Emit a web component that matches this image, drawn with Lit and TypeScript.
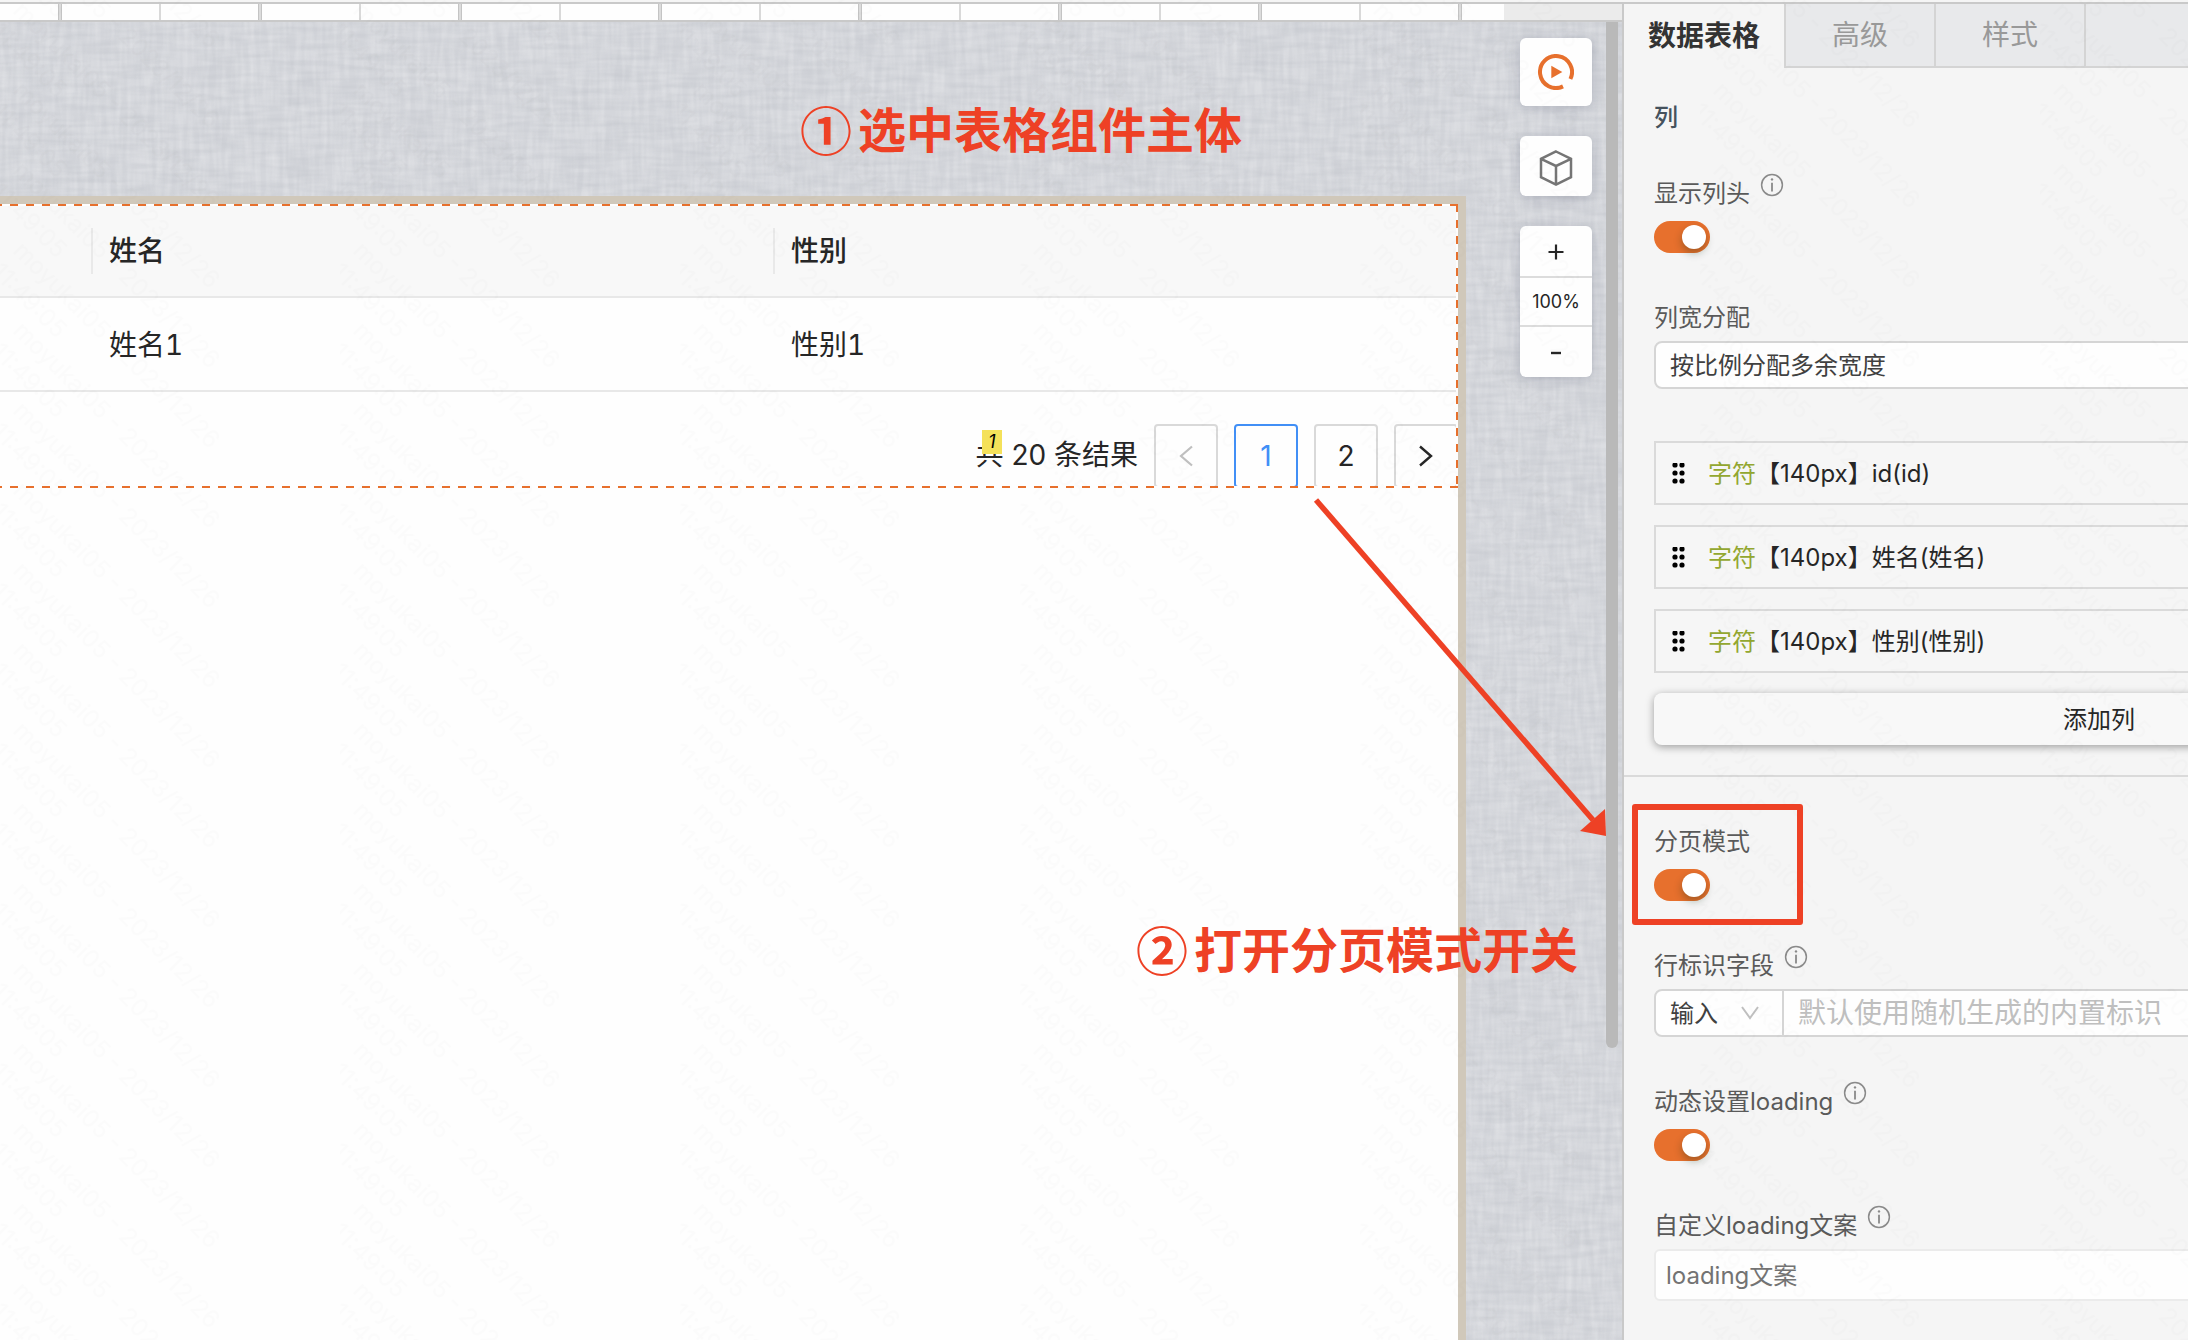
import { LitElement, html, css, svg } from "lit";
import { customElement, property } from "lit/decorators.js";

const FONT = css`Inter, "Noto Sans CJK SC", sans-serif`;

@customElement("info-mark")
class InfoMark extends LitElement {
  static styles = css`
    :host { display: block; width: 24px; height: 24px; }
    svg { display: block; }
  `;
  render() {
    return html`<svg width="24" height="24" viewBox="0 0 24 24" fill="none" stroke="#8a8a8a" stroke-width="1.5" aria-hidden="true">
      <circle cx="12" cy="12" r="10.4" />
      <path d="M12 9.8V18.500" stroke-width="1.800" />
      <circle cx="12" cy="6.4" r="1.2" fill="#8a8a8a" stroke="none" />
    </svg>`;
  }
}

@customElement("toggle-field")
class ToggleField extends LitElement {
  @property() label = "";
  @property({ type: Boolean }) info = false;
  static styles = css`
    :host { display: flex; flex-direction: column; align-items: flex-start; gap: 12px; }
    .head { display: flex; align-items: flex-start; gap: 10px; height: 32px; }
    label { font: 400 24px/34px ${FONT}; color: #5a5a5a; }
    info-mark { margin-top: -4px; }
    input {
      appearance: none; box-sizing: border-box; margin: 0; width: 56px; height: 32px; padding: 4px;
      border-radius: 16px; background: #cfcfcf; display: flex; cursor: pointer;
    }
    input::before {
      content: ""; width: 24px; height: 24px; border-radius: 50%; background: #fff;
      box-shadow: 0 4px 8px rgba(0, 35, 11, 0.3);
    }
    input:checked { background: #e7702d; justify-content: flex-end; }
  `;
  render() {
    return html`
      <div class="head"><label for="toggle">${this.label}</label>${this.info ? html`<info-mark></info-mark>` : ""}</div>
      <input id="toggle" type="checkbox" role="switch" checked />
    `;
  }
}

@customElement("config-panel")
class ConfigPanel extends LitElement {
  static styles = css`
    :host { display: block; overflow: hidden; background: #f5f5f5; font: 400 24px/34px ${FONT}; color: #262626; }
    .tabs { display: flex; height: 64px; }
    .tab {
      box-sizing: border-box; width: 150px; padding: 0; border: solid #d4d4d4; border-width: 0 0 2px 2px;
      background: #e8e9eb; color: #999; font: 400 28px/60px ${FONT};
    }
    .tab.on { width: 160px; border: 0; background: none; color: #333; font-weight: 700; }
    .rest { flex: 1; border: solid #d4d4d4; border-width: 0 0 2px 2px; background: #e8e9eb; }
    .section { box-sizing: border-box; min-width: 950px; padding: 33px 30px 30px; display: flex; flex-direction: column; gap: 48px; }
    .section + .section { border-top: 2px solid #dadada; padding-top: 48px; }
    h2 { margin: 0 0 -6px; font: 500 24px/34px ${FONT}; color: #45525d; }
    .field { display: flex; flex-direction: column; gap: 8px; }
    .head { display: flex; align-items: flex-start; gap: 10px; height: 32px; color: #5a5a5a; }
    info-mark { margin-top: -4px; }
    select, input {
      box-sizing: border-box; height: 48px; margin: 0; border: 2px solid #d5d5d5; border-radius: 8px;
      background: #fefefe; font: 400 24px/32px ${FONT}; color: #404040; appearance: none; outline: 0;
    }
    select { padding: 2px 14px 0; }
    .group { display: flex; position: relative; }
    .group select { width: 130px; border-radius: 8px 0 0 8px; }
    .group input { flex: 1; margin-left: -2px; padding: 0 14px; border-radius: 0 8px 8px 0; font-size: 28px; }
    .group svg { position: absolute; left: 86px; top: 16px; pointer-events: none; }
    .plain { height: 52px; border-color: #ebebeb; padding: 0 10px; border-radius: 6px; }
    input::placeholder { color: #bfbfbf; opacity: 1; }
    .plain::placeholder { color: #737373; }
    .columns { display: flex; flex-direction: column; gap: 20px; margin: 4px 0 0; padding: 0; list-style: none; }
    .column {
      box-sizing: border-box; height: 64px; padding: 2px 16px 0; display: flex; align-items: center;
      border: 2px solid #dadada; background: #f6f6f6;
    }
    .column svg { margin-right: 22px; }
    .type { color: #93a730; }
    .add {
      height: 52px; padding: 2px 0 0; margin-top: -28px; border: 0; border-radius: 8px; background: #f8f8f8; color: #262626;
      font: 400 24px/32px ${FONT}; box-shadow: 0 2px 8px rgba(0, 0, 0, 0.36);
    }
  `;
  render() {
    const columns = ["id(id)", "姓名(姓名)", "性别(性别)"];
    return html`
      <div class="tabs" role="tablist">
        <button class="tab on" role="tab" aria-selected="true">数据表格</button>
        <button class="tab" role="tab">高级</button>
        <button class="tab" role="tab">样式</button>
        <div class="rest"></div>
      </div>
      <div class="section">
        <h2>列</h2>
        <toggle-field label="显示列头" info></toggle-field>
        <div class="field">
          <div class="head"><label for="width-mode">列宽分配</label></div>
          <select id="width-mode"><option>按比例分配多余宽度</option></select>
        </div>
        <ul class="columns">
          ${columns.map(
            (name) => html`<li class="column">
              <svg width="14" height="22" viewBox="0 0 14 22" fill="#000" aria-hidden="true">
                ${[3, 11, 19].map((y) => [3, 10].map((x) => svg`<circle cx=${x} cy=${y - 1} r="2.6" />`))}
              </svg>
              <span class="type">字符</span><span>【140px】${name}</span>
            </li>`
          )}
        </ul>
        <button class="add">添加列</button>
      </div>
      <div class="section">
        <toggle-field label="分页模式"></toggle-field>
        <div class="field">
          <div class="head"><label for="row-key">行标识字段</label><info-mark></info-mark></div>
          <div class="group">
            <select aria-label="类型"><option>输入</option></select>
            <input id="row-key" placeholder="默认使用随机生成的内置标识" />
            <svg width="20" height="16" viewBox="0 0 20 16" fill="none" stroke="#bfbfbf" stroke-width="2" aria-hidden="true"><path d="M2 2l8 11 8-11" /></svg>
          </div>
        </div>
        <toggle-field label="动态设置loading" info></toggle-field>
        <div class="field">
          <div class="head"><label for="loading-text">自定义loading文案</label><info-mark></info-mark></div>
          <input id="loading-text" class="plain" placeholder="loading文案" />
        </div>
      </div>
    `;
  }
}

@customElement("design-canvas")
class DesignCanvas extends LitElement {
  static styles = css`
    :host { display: flex; flex-direction: column; position: relative; overflow: hidden; font: 400 28px/40px ${FONT}; color: #262626; }
    .ruler { height: 16px; border-bottom: 2px solid #c9c9c9; background: #ebebeb; display: flex; }
    .scale {
      flex: 1; margin-right: 118px;
      background:
        linear-gradient(90deg, #c4c4c4 1px, #dcdcdc 1px 3px, #c4c4c4 3px 4px, transparent 4px) 58px 0 / 200px 100%,
        linear-gradient(90deg, #d9d9d9 2px, transparent 2px) 159px 0 / 200px 100%,
        #fefefe;
    }
    .desk { flex: 1; position: relative; background: #d4d6db; display: flex; padding: 174px 0 0; overflow: hidden; }
    .linen { position: absolute; inset: 0; width: 100%; height: 100%; }
    .board { position: relative; flex: 1; margin-right: 156px; border: solid #d0c8ba; border-width: 8px 8px 0 0; background: #fefefe; }
    .widget { position: relative; height: 284px; overflow: hidden; padding: 2px 2px 0 0; box-sizing: border-box; }
    .outline {
      position: absolute; inset: 0; pointer-events: none;
      --h: repeating-linear-gradient(90deg, #e7702d 0 8px, #fefefe 8px 16px);
      --v: repeating-linear-gradient(180deg, #e7702d 0 8px, #fefefe 8px 16px);
      background: var(--h) -6px 0 / calc(100% + 6px) 2px no-repeat, var(--h) -6px 100% / calc(100% + 6px) 2px no-repeat, var(--v) 100% 0 / 2px 100% no-repeat;
    }
    table { width: 100%; border-collapse: separate; border-spacing: 0; table-layout: fixed; font-variant-numeric: tabular-nums; }
    .lead { width: 92px; }
    th, td { box-sizing: border-box; text-align: left; border-bottom: 2px solid #e8e8e8; padding: 0; }
    th { height: 92px; background: #f8f8f8; font-weight: 500; }
    td { height: 94px; }
    th > div { border-left: 2px solid #e9e9e9; margin-left: -1px; padding-left: 16px; line-height: 46px; }
    td { padding: 2px 0 0 17px; }
    .pager { display: flex; gap: 16px; margin-top: 32px; width: max-content; margin-left: auto; margin-right: -2px; }
    .total { line-height: 62px; }
    .page {
      box-sizing: border-box; width: 64px; height: 64px; border: 2px solid #d9d9d9; border-radius: 4px; background: #fefefe;
      padding: 0; font: 400 28px/60px ${FONT}; color: #262626; display: grid; place-items: center;
    }
    .page.on { border-color: #418ff6; color: #418ff6; }
    .badge {
      position: absolute; right: 456px; top: 226px; width: 20px; height: 24px; background: #f4e15a;
      font: italic 400 18px/24px ${FONT}; text-align: center; color: #000;
    }
    .tools { position: absolute; right: 30px; top: 16px; display: flex; flex-direction: column; gap: 30px; }
    .card { width: 72px; border: 0; padding: 0; border-radius: 6px; background: #fefefe; box-shadow: 0 2px 12px rgba(90, 95, 120, 0.3); display: grid; place-items: center; }
    .run { height: 68px; }
    .cube { height: 60px; padding-top: 3px; }
    .zoom { grid-template-columns: 100%; }
    .zoom button, .zoom output { height: 50px; display: grid; place-items: center; border: 0; padding: 2px 0 0; background: none; color: #262626; font: 400 18px/48px ${FONT}; box-sizing: border-box; }
    .zoom output { height: 51px; border: solid #dcdcdc; border-width: 2px 0; width: 100%; padding: 0; }
    .thumb { position: absolute; right: 4px; top: 0; width: 12px; height: 1026px; border-radius: 0 0 6px 6px; background: #b9b9b9; }
  `;
  render() {
    return html`
      <div class="ruler"><div class="scale"></div></div>
      <div class="desk">
        <svg class="linen" aria-hidden="true">
          <filter id="warp" x="0" y="0" width="100%" height="100%" color-interpolation-filters="sRGB"><feTurbulence type="fractalNoise" baseFrequency="0.18 0.025" numOctaves="2" seed="3" /><feColorMatrix values="0 0 0 0 1  0 0 0 0 1  0 0 0 0 1  1.5 0 0 0 -0.5" /></filter>
          <filter id="weft" x="0" y="0" width="100%" height="100%" color-interpolation-filters="sRGB"><feTurbulence type="fractalNoise" baseFrequency="0.025 0.18" numOctaves="2" seed="8" /><feColorMatrix values="0 0 0 0 0.6  0 0 0 0 0.62  0 0 0 0 0.66  1.5 0 0 0 -0.5" /></filter>
          <rect width="100%" height="100%" filter="url(#warp)" opacity="0.3" />
          <rect width="100%" height="100%" filter="url(#weft)" opacity="0.2" />
        </svg>
        <div class="board">
          <div class="widget">
            <table>
              <colgroup><col class="lead" /><col /><col /></colgroup>
              <thead><tr><th></th><th><div>姓名</div></th><th><div>性别</div></th></tr></thead>
              <tbody><tr><td></td><td>姓名1</td><td>性别1</td></tr></tbody>
            </table>
            <div class="pager">
              <span class="total">共 20 条结果</span>
              <button class="page" aria-label="上一页" disabled><svg width="14" height="22" viewBox="0 0 14 22" fill="none" stroke="#bfbfbf" stroke-width="2.2"><path d="M13 1.500L2 11l11 9.500" /></svg></button>
              <button class="page on">1</button>
              <button class="page">2</button>
              <button class="page" aria-label="下一页"><svg width="14" height="22" viewBox="0 0 14 22" fill="none" stroke="#262626" stroke-width="2.4"><path d="M1 1.500L12 11L1 20.500" /></svg></button>
            </div>
            <div class="outline"></div>
            <span class="badge">1</span>
          </div>
        </div>
        <div class="tools">
          <button class="card run" aria-label="运行">
            <svg width="36" height="36" viewBox="0 0 36 36" aria-hidden="true">
              <path d="M25 32.400A16 16 0 1 1 32.400 25" fill="none" stroke="#e7702d" stroke-width="4" />
              <path d="M13.300 11.700L24.300 18L13.300 24.300Z" fill="#e7702d" />
            </svg>
          </button>
          <button class="card cube" aria-label="组件">
            <svg width="34" height="38" viewBox="0 0 34 38" fill="none" stroke="#757575" stroke-width="2.500" aria-hidden="true">
              <path d="M17 2.500L32 9.800V28.200L17 35.500L2 28.200V9.800Z M2 9.800L17 17L32 9.800 M17 17V35.500" />
            </svg>
          </button>
          <div class="card zoom">
            <button aria-label="放大"><svg width="16" height="16" viewBox="0 0 16 16" stroke="#262626" stroke-width="2.200"><path d="M8 0.500V15.500M0.500 8H15.500" /></svg></button>
            <output>100%</output>
            <button aria-label="缩小"><svg width="10" height="4" viewBox="0 0 10 4" stroke="#262626" stroke-width="2.400"><path d="M0 2H10" /></svg></button>
          </div>
        </div>
        <div class="thumb"></div>
      </div>
    `;
  }
}

@customElement("app-root")
class AppRoot extends LitElement {
  static styles = css`
    :host { display: grid; grid-template-columns: minmax(0, 1fr) 564px; column-gap: 2px; box-sizing: border-box; position: relative; height: 100vh; overflow: hidden; padding-top: 4px; background: linear-gradient(#f5f5f5 2px, #c9c9c9 2px); }
    .mark, .notes { position: absolute; inset: 0; width: 100%; height: 100%; pointer-events: none; }
    .mark { font: 400 24px/30px ${FONT}; fill: #000; fill-opacity: 0.012; }
    .note { position: absolute; right: 946px; top: 96px; display: flex; align-items: flex-start; gap: 6px; color: #ee4125; font: 700 48px/70px ${FONT}; white-space: nowrap; }
    .note.second { right: 610px; top: 916px; }
    .num { font: 700 52px/66px "Noto Sans CJK SC", sans-serif; }
    .frame { position: absolute; right: 385px; top: 804px; box-sizing: border-box; width: 171px; height: 121px; border: 6px solid #ee4125; border-radius: 3px; }
    .arrow { position: absolute; right: 570px; top: 490px; }
  `;
  render() {
    return html`
      <design-canvas></design-canvas>
      <config-panel></config-panel>
      <svg class="mark" aria-hidden="true">
        <pattern id="stamp" width="340" height="80" patternUnits="userSpaceOnUse">
          ${[-240, -160, -80, 0].map(
            (y) => svg`<g transform=${`translate(12 ${y + 12}) rotate(45)`}><text>moyukai05 - 2023/12/26</text><text y="30">11:49:05</text></g>`
          )}
        </pattern>
        <rect width="100%" height="100%" fill="url(#stamp)" fill-opacity="1" />
      </svg>
      <div class="notes">
        <div class="note"><span class="num">①</span><span>选中表格组件主体</span></div>
        <div class="note second"><span class="num">②</span><span>打开分页模式开关</span></div>
        <div class="frame"></div>
        <svg class="arrow" width="310" height="350" viewBox="0 0 310 350" aria-hidden="true">
          <path d="M8 10L285 330" stroke="#ee4125" stroke-width="5.500" />
          <path d="M298 346L272 341L297 319Z" fill="#ee4125" />
        </svg>
      </div>
    `;
  }
}
